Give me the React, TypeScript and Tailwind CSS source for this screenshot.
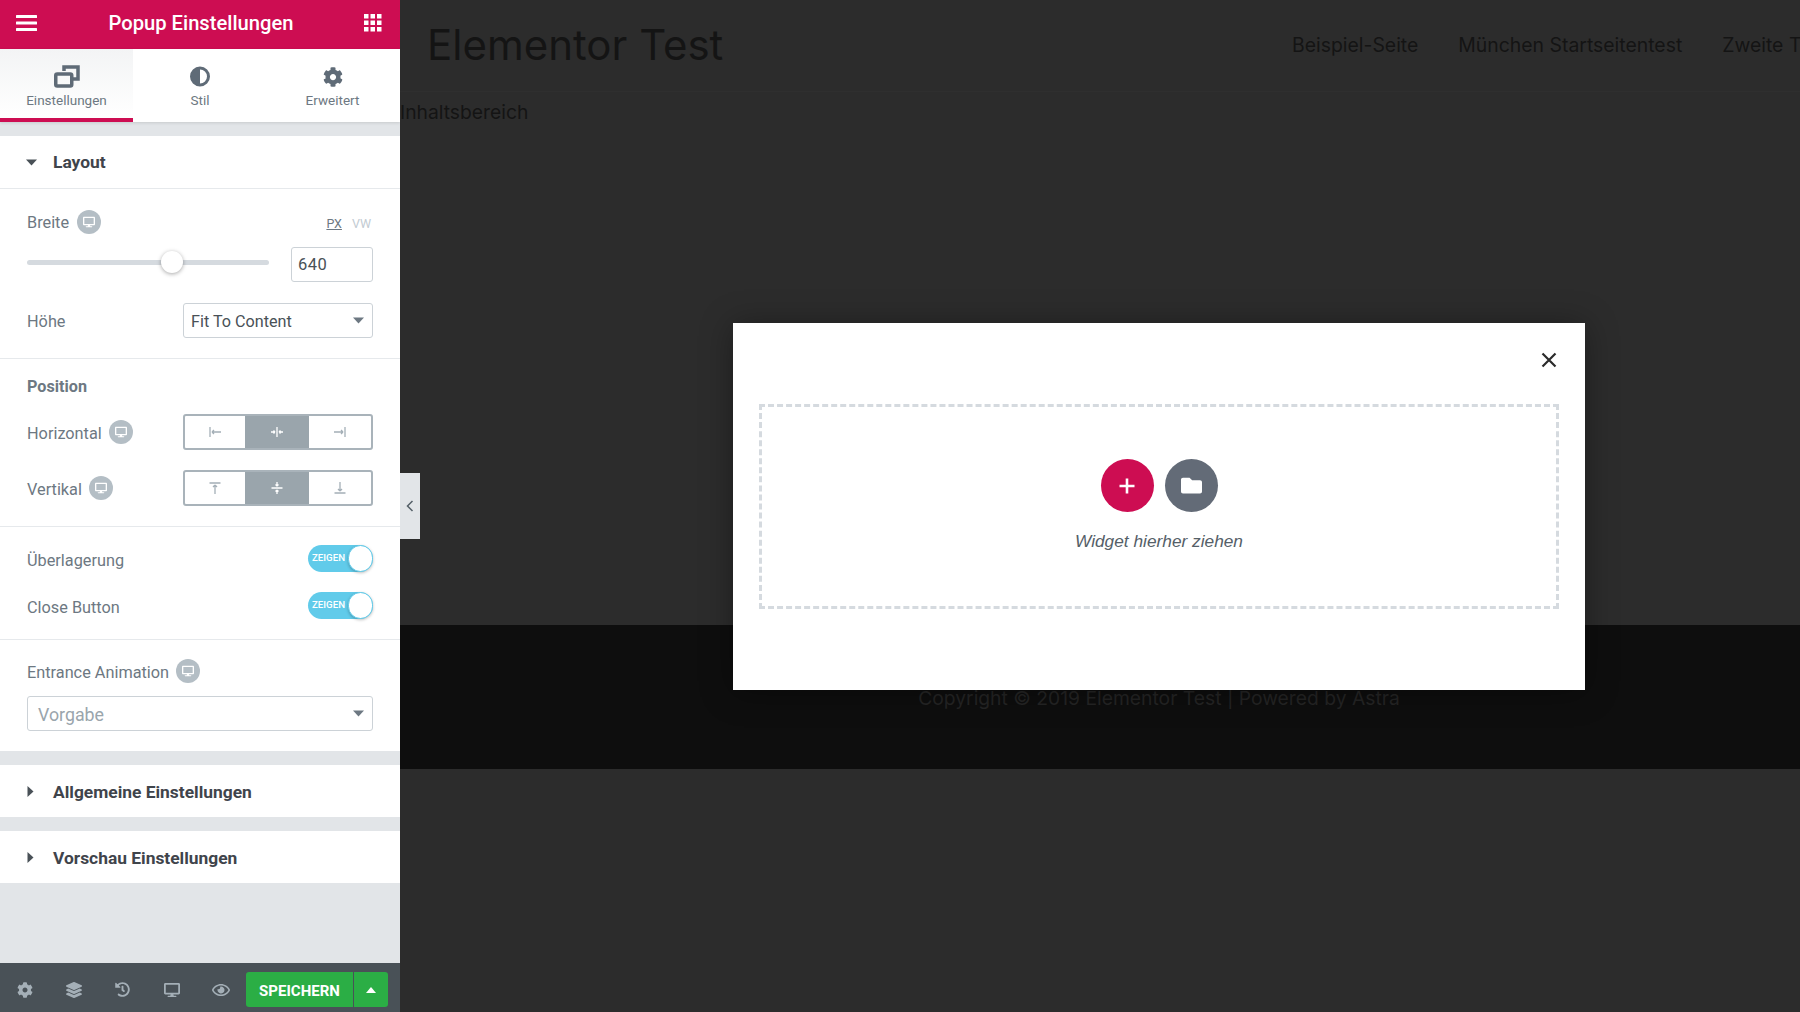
import type { ReactNode } from "react";
import { FaCog, FaDesktop, FaFolder, FaHistory, FaLayerGroup, FaRegEye } from "react-icons/fa";

const sans = "font-['Roboto',sans-serif]";

function DeviceBadge() {
  return (
    <span className="flex h-[24px] w-[24px] items-center justify-center rounded-full bg-[#b4bec5] text-white">
      <FaDesktop size={12} />
    </span>
  );
}

function Caret({ down, className }: { down?: boolean; className?: string }) {
  return (
    <svg width="11" height="11" viewBox="0 0 11 11" className={className}>
      {down ? <path d="M0 2.5h11L5.5 8.5z" fill="currentColor" /> : <path d="M2.5 0v11l6-5.5z" fill="currentColor" />}
    </svg>
  );
}

function SelectBox({ value, className }: { value: string; className: string }) {
  return (
    <div className={`flex h-[35px] items-center justify-between rounded-[3px] border border-[#ccd2d7] bg-white pr-[8px] ${className}`}>
      <span className="pt-[4px]">{value}</span>
      <Caret down className="text-[#6d7882]" />
    </div>
  );
}

function Toggle() {
  return (
    <div className="relative flex h-[27px] w-[65px] items-center rounded-full bg-[#61cbea] pl-[4px] text-[9.7px] font-medium text-white">
      ZEIGEN
      <span className="absolute right-0 top-0 h-[27px] w-[25px] rounded-full border border-[#61cbea] bg-white shadow-[0_1px_3px_rgba(0,0,0,0.25)]" />
    </div>
  );
}

function Segments({ icons }: { icons: ReactNode[] }) {
  return (
    <div className="flex h-[36px] w-[190px] overflow-hidden rounded-[3px] border-2 border-[#a9b3ba] text-[#a4afb7]">
      <div className="flex w-[60px] items-center justify-center">{icons[0]}</div>
      <div className="flex w-[64px] items-center justify-center bg-[#9aa5ac] text-white">{icons[1]}</div>
      <div className="flex flex-1 items-center justify-center">{icons[2]}</div>
    </div>
  );
}

function AlignIcon({ d }: { d: string }) {
  return (
    <svg width="14" height="14" viewBox="0 0 14 14" fill="none" stroke="currentColor" strokeWidth="1.3">
      <path d={d} />
    </svg>
  );
}

function Panel() {
  return (
    <aside className={`flex h-full w-[400px] flex-none flex-col bg-[#e2e5e8] text-[#6d7882] ${sans}`}>
      <header className="flex h-[49px] flex-none items-center justify-between bg-[#cd0d52] pb-[3px] pl-[16px] pr-[18px] text-white">
        <svg width="22" height="16" viewBox="0 0 22 16" fill="currentColor">
          <rect width="21" height="3" y="0" rx="0.5" />
          <rect width="21" height="3" y="6.5" rx="0.5" />
          <rect width="21" height="3" y="13" rx="0.5" />
        </svg>
        <span className="text-[20.2px] font-medium">Popup Einstellungen</span>
        <svg width="18" height="18" viewBox="0 0 18 18" fill="currentColor">
          {[0, 6.5, 13].flatMap((y) =>
            [0, 6.5, 13].map((x) => <rect key={`${x}-${y}`} x={x} y={y} width="4.5" height="4.5" />),
          )}
        </svg>
      </header>

      <nav className="flex h-[73px] flex-none bg-white text-[13.5px] text-[#6d7882] shadow-[0_1px_3px_rgba(0,0,0,0.12)]">
        <div className="flex w-[133px] flex-col items-center border-b-[4px] border-[#cd0d52] bg-gradient-to-b from-[#f3f4f5] to-white pt-[16px]">
          <svg width="26" height="23" viewBox="0 0 26 23" fill="none" stroke="#5f6b77" strokeWidth="3.5">
            <path d="M10 6V2h14v12h-5" />
            <rect x="1.75" y="9" width="16" height="12" rx="1.5" />
          </svg>
          <span className="mt-[4px] leading-[16px]">Einstellungen</span>
        </div>
        <div className="flex w-[134px] flex-col items-center pt-[16px]">
          <svg width="20" height="23" viewBox="0 0 20 20">
            <circle cx="10" cy="10" r="8.5" fill="none" stroke="#5f6b77" strokeWidth="3" />
            <path d="M10 1a9 9 0 0 0 0 18z" fill="#5f6b77" />
          </svg>
          <span className="mt-[4px] leading-[16px]">Stil</span>
        </div>
        <div className="flex flex-1 flex-col items-center pr-[2px] pt-[16px]">
          <span className="flex h-[23px] items-center text-[#5f6b77]">
            <FaCog size={20} />
          </span>
          <span className="mt-[4px] leading-[16px]">Erweitert</span>
        </div>
      </nav>

      <div className="mt-[14px] flex h-[53px] flex-none items-center border-b border-[#e6e9ec] bg-white text-[17.4px] font-bold text-[#3f444b]">
        <Caret down className="ml-[26px] text-[#495157]" />
        <span className="ml-[16px]">Layout</span>
      </div>

      <section className="flex-none border-b border-[#e6e9ec] bg-white px-[27px] pb-[20px] text-[16.3px]">
        <div className="mt-[21px] flex h-[24px] items-center">
          <span className="pt-[3px]">Breite</span>
          <span className="ml-[8px]">
            <DeviceBadge />
          </span>
          <span className="ml-auto pt-[4px] text-[12.5px] underline">PX</span>
          <span className="ml-[10px] mr-[2px] pt-[4px] text-[12.5px] text-[#c2cbd2]">VW</span>
        </div>
        <div className="mt-[13px] flex h-[35px] items-center justify-between">
          <div className="relative mb-[5px] h-[5px] w-[242px] rounded-full bg-[#d5dadf]">
            <span className="absolute left-[134px] top-[-8.5px] h-[22px] w-[22px] rounded-full bg-white shadow-[0_1px_4px_rgba(0,0,0,0.35)]" />
          </div>
          <div className="flex h-[35px] w-[82px] items-center rounded-[3px] border border-[#ccd2d7] pl-[6px] pt-[2px] text-[16.5px] tracking-[0.5px] text-[#495157]">
            640
          </div>
        </div>
        <div className="mt-[21px] flex h-[35px] items-center justify-between">
          <span className="pt-[3px]">Höhe</span>
          <SelectBox value="Fit To Content" className="w-[190px] pl-[7px] text-[16.2px] text-[#495157]" />
        </div>
      </section>

      <section className="flex-none border-b border-[#e6e9ec] bg-white px-[27px] pb-[20px] text-[16.3px]">
        <div className="mt-[19px] h-[18px] text-[16.2px] font-bold leading-[18px]">Position</div>
        <div className="mt-[18px] flex items-center justify-between">
          <div className="flex items-center gap-[7px]">
            <span className="pt-[4px]">Horizontal</span> <DeviceBadge />
          </div>
          <Segments
            icons={[
              <AlignIcon key="l" d="M2 2v10M4 7h9M4 7l2-2M4 7l2 2" />,
              <AlignIcon key="c" d="M7 2v10M1 7h4M13 7H9M5 7L3.5 5.5M5 7L3.5 8.5M9 7l1.5-1.5M9 7l1.5 1.5" />,
              <AlignIcon key="r" d="M12 2v10M1 7h9M10 7L8 5M10 7L8 9" />,
            ]}
          />
        </div>
        <div className="mt-[20px] flex items-center justify-between">
          <div className="flex items-center gap-[7px]">
            <span className="pt-[4px]">Vertikal</span> <DeviceBadge />
          </div>
          <Segments
            icons={[
              <AlignIcon key="t" d="M1.5 2h11M7 4v9M7 4L5 6M7 4l2 2" />,
              <AlignIcon key="m" d="M1.5 7h11M7 1v4M7 13V9M7 5L5.5 3.5M7 5l1.5-1.5M7 9l-1.5 1.5M7 9l1.5 1.5" />,
              <AlignIcon key="b" d="M1.5 12h11M7 1v9M7 10L5 8M7 10l2-2" />,
            ]}
          />
        </div>
      </section>

      <section className="flex-none border-b border-[#e6e9ec] bg-white px-[27px] pb-[20px] pt-[18px] text-[16.3px]">
        <div className="flex h-[27px] items-center justify-between">
          <span className="pt-[6px]">Überlagerung</span>
          <Toggle />
        </div>
        <div className="mt-[20px] flex h-[27px] items-center justify-between">
          <span className="pt-[6px]">Close Button</span>
          <Toggle />
        </div>
      </section>

      <section className="flex-none bg-white px-[27px] pb-[20px] text-[16.3px]">
        <div className="mt-[19px] flex h-[24px] items-center gap-[7px]">
          <span className="pt-[4px]">Entrance Animation</span> <DeviceBadge />
        </div>
        <SelectBox value="Vorgabe" className="mt-[13px] w-[346px] pl-[10px] text-[17.8px] text-[#9aa5ac]" />
      </section>

      <div className="mt-[14px] flex h-[52px] flex-none items-center bg-white text-[17.4px] font-bold text-[#3f444b]">
        <Caret className="ml-[25px] mt-[1px] text-[#495157]" />
        <span className="ml-[17px] pt-[3px]">Allgemeine Einstellungen</span>
      </div>
      <div className="mt-[14px] flex h-[52px] flex-none items-center bg-white text-[17.4px] font-bold text-[#3f444b]">
        <Caret className="ml-[25px] mt-[1px] text-[#495157]" />
        <span className="ml-[17px] pt-[3px]">Vorschau Einstellungen</span>
      </div>

      <div className="flex-1" />

      <footer className="flex h-[49px] flex-none items-start bg-[#495157] pt-[9px] text-[#a4afb7]">
        <span className="flex h-[35px] w-[49px] items-center justify-center">
          <FaCog size={16} />
        </span>
        <span className="flex h-[35px] w-[49px] items-center justify-center">
          <FaLayerGroup size={16} />
        </span>
        <span className="flex h-[35px] w-[49px] items-center justify-center">
          <FaHistory size={15} />
        </span>
        <span className="flex h-[35px] w-[49px] items-center justify-center">
          <FaDesktop size={16} />
        </span>
        <span className="flex h-[35px] w-[49px] items-center justify-center">
          <FaRegEye size={18} />
        </span>
        <div className="ml-[1px] flex h-[35px] font-medium text-white">
          <span className="flex w-[107px] items-center justify-center rounded-l-[3px] bg-[#2bae45] pt-[3px] text-[15px] font-bold">SPEICHERN</span>
          <span className="ml-[1px] flex w-[34px] items-center justify-center rounded-r-[3px] bg-[#2bae45]">
            <svg width="10" height="6" viewBox="0 0 10 6">
              <path d="M0 6h10L5 0z" fill="currentColor" />
            </svg>
          </span>
        </div>
      </footer>
    </aside>
  );
}

function Preview() {
  return (
    <main className="flex h-full min-w-0 flex-1 flex-col overflow-hidden bg-[#2c2c2c] font-['Inter',sans-serif] text-[#141414]">
      <header className="flex h-[92px] flex-none items-center border-b border-[#2f2f2f] pl-[27px]">
        <span className="w-[865px] flex-none pb-[2px] text-[42px] font-normal">Elementor Test</span>
        <div className="flex flex-none gap-[40px] whitespace-nowrap text-[19.4px]">
          <span>Beispiel-Seite</span>
          <span>München Startseitentest</span>
          <span>Zweite Testseite</span>
        </div>
      </header>
      <div className="h-[533px] flex-none pt-[6px] text-[19.3px] leading-[28px]">Inhaltsbereich</div>
      <div className="flex h-[144px] flex-none items-center justify-center bg-[#0e0e0e] pl-[118px] pt-[2px] text-[19.3px] text-[#252525]">
        Copyright © 2019 Elementor Test | Powered by Astra
      </div>
    </main>
  );
}

export default function App() {
  return (
    <div className="relative flex h-[1012px] w-[1800px] overflow-hidden">
      <Panel />
      <Preview />

      <button className="absolute left-[400px] top-[473px] flex h-[66px] w-[20px] items-center justify-center bg-[#e2e5e8] text-[#556068]">
        <svg width="8" height="12" viewBox="0 0 8 12" fill="none" stroke="currentColor" strokeWidth="1.5">
          <path d="M6.5 1L1.5 6l5 5" />
        </svg>
      </button>

      <div className="absolute left-[733px] top-[323px] h-[367px] w-[852px] bg-white pl-[26px] pt-[81px] shadow-[0_2px_30px_rgba(0,0,0,0.35)]">
        <svg width="16" height="16" viewBox="0 0 16 16" className="absolute right-[28px] top-[29px] text-[#2b2b2b]" fill="none" stroke="currentColor" strokeWidth="2.2">
          <path d="M1.5 1.5l13 13M14.5 1.5l-13 13" />
        </svg>
        <div className="flex h-[205px] w-[800px] flex-col items-center border-[3px] border-dashed border-[#d5dadf] pt-[52px] font-['Liberation_Sans',sans-serif]">
          <div className="flex gap-[11px]">
            <span className="flex h-[53px] w-[53px] items-center justify-center rounded-full bg-[#cd0d52] text-white">
              <svg width="18" height="18" viewBox="0 0 18 18" fill="none" stroke="currentColor" strokeWidth="2.6">
                <path d="M9 1.5v15M1.5 9h15" />
              </svg>
            </span>
            <span className="flex h-[53px] w-[53px] items-center justify-center rounded-full bg-[#636b77] text-white">
              <FaFolder size={21} />
            </span>
          </div>
          <span className="mt-[17px] text-[17.3px] italic leading-[24px] text-[#556068]">Widget hierher ziehen</span>
        </div>
      </div>
    </div>
  );
}
